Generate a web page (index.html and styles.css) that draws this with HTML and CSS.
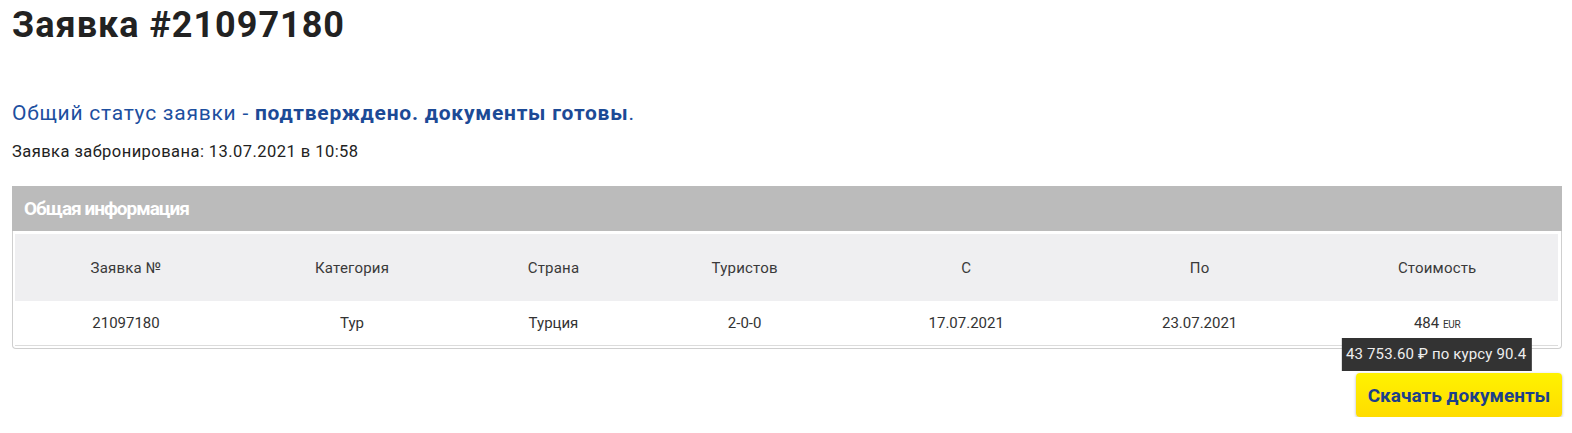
FILE: index.html
```html
<!DOCTYPE html>
<html lang="ru">
<head>
<meta charset="utf-8">
<title>Заявка #21097180</title>
<link rel="stylesheet" href="styles.css">
</head>
<body>
<div class="page">
  <h1 class="title">Заявка #21097180</h1>
  <p class="status">Общий статус заявки - <b>подтверждено. документы готовы</b>.</p>
  <p class="booked">Заявка забронирована: 13.07.2021 в 10:58</p>
  <section class="panel">
    <div class="panel-head">Общая информация</div>
    <div class="panel-body">
      <table class="info">
        <thead>
          <tr>
            <th>Заявка №</th>
            <th>Категория</th>
            <th>Страна</th>
            <th>Туристов</th>
            <th>С</th>
            <th>По</th>
            <th>Стоимость</th>
          </tr>
        </thead>
        <tbody>
          <tr>
            <td>21097180</td>
            <td>Тур</td>
            <td>Турция</td>
            <td>2-0-0</td>
            <td>17.07.2021</td>
            <td>23.07.2021</td>
            <td><span class="price">484 <small class="cur">EUR</small><span class="tip">43 753.60 ₽ по курсу 90.4</span></span></td>
          </tr>
        </tbody>
      </table>
    </div>
  </section>
  <div class="actions">
    <button class="btn-download" type="button">Скачать документы</button>
  </div>
</div>
</body>
</html>
```

FILE: styles.css
```css
html, body {
  margin: 0;
  padding: 0;
  background: #fff;
}
body {
  font-family: Roboto, "Noto Sans", Arial, sans-serif;
  color: #222;
}
.page {
  padding: 5px 10px 0 12px;
}
.title {
  margin: 0;
  font-size: 36px;
  line-height: 40px;
  font-weight: 700;
  letter-spacing: 1px;
  color: #222;
}
.status {
  margin: 56px 0 0;
  font-size: 21px;
  line-height: 24px;
  letter-spacing: 0.75px;
  color: #1d4f9f;
}
.status b {
  font-weight: 700;
  color: #1c4a96;
}
.booked {
  margin: 17px 0 0;
  font-size: 16.5px;
  line-height: 20px;
  letter-spacing: 0.45px;
  color: #222;
}
.panel {
  margin-top: 24px;
  border: 1px solid #cfcfcf;
  border-top: none;
  border-radius: 0 0 4px 4px;
}
.panel-head {
  margin: 0 -1px;
  height: 45px;
  display: flex;
  align-items: center;
  padding: 0 12px;
  background: #bbbbbb;
  color: #fff;
  font-size: 19px;
  font-weight: 700;
  letter-spacing: -1px;
}
.panel-body {
  padding: 3px 3px 2px 2px;
}
.info {
  width: 100%;
  border-collapse: collapse;
  font-size: 15px;
  color: #333;
  border-bottom: 1px solid #dcdcdc;
}
.info th {
  background: #efeff1;
  font-weight: 400;
  height: 67px;
  padding: 0 8px;
  text-align: center;
  color: #3a3a3a;
  letter-spacing: 0.2px;
}
.info td {
  height: 44px;
  padding: 0 8px;
  text-align: center;
  vertical-align: middle;
}
.price {
  position: relative;
  display: inline-block;
}
.cur {
  font-size: 10px;
  letter-spacing: -0.3px;
}
.tip {
  position: absolute;
  top: 24px;
  left: 50%;
  transform: translateX(-50%);
  white-space: nowrap;
  background: #333;
  color: #eee;
  font-size: 15px;
  line-height: 33px;
  letter-spacing: 0.15px;
  padding: 0 6px 0 4px;
  z-index: 2;
}
.actions {
  display: flex;
  justify-content: flex-end;
  margin-top: 24px;
}
.btn-download {
  width: 206px;
  height: 44px;
  border: none;
  border-radius: 4px;
  background: linear-gradient(#fff200, #ffdc00);
  box-shadow: 0 1px 3px rgba(0, 0, 0, 0.3);
  color: #1c3f8a;
  font-family: Roboto, "Noto Sans", Arial, sans-serif;
  font-size: 19px;
  font-weight: 700;
  padding: 0;
  cursor: pointer;
}
```
